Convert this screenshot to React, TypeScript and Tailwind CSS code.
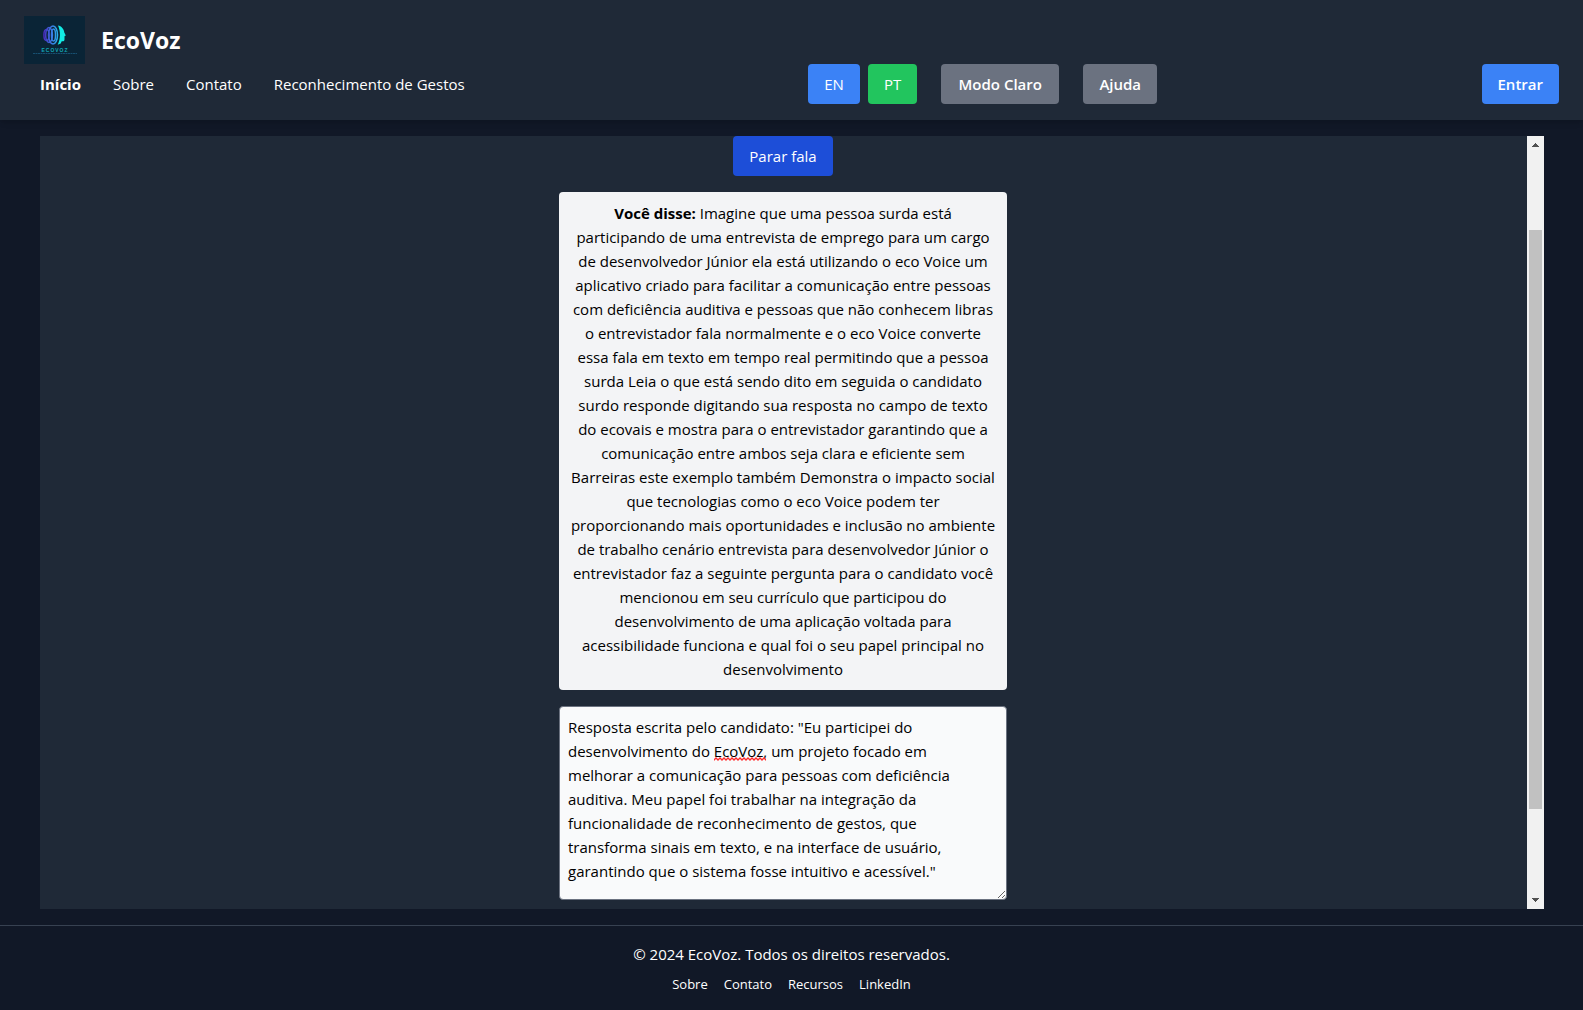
import React from "react";

const transcript = `Imagine que uma pessoa surda está
participando de uma entrevista de emprego para um cargo
de desenvolvedor Júnior ela está utilizando o eco Voice um
aplicativo criado para facilitar a comunicação entre pessoas
com deficiência auditiva e pessoas que não conhecem libras
o entrevistador fala normalmente e o eco Voice converte
essa fala em texto em tempo real permitindo que a pessoa
surda Leia o que está sendo dito em seguida o candidato
surdo responde digitando sua resposta no campo de texto
do ecovais e mostra para o entrevistador garantindo que a
comunicação entre ambos seja clara e eficiente sem
Barreiras este exemplo também Demonstra o impacto social
que tecnologias como o eco Voice podem ter
proporcionando mais oportunidades e inclusão no ambiente
de trabalho cenário entrevista para desenvolvedor Júnior o
entrevistador faz a seguinte pergunta para o candidato você
mencionou em seu currículo que participou do
desenvolvimento de uma aplicação voltada para
acessibilidade funciona e qual foi o seu papel principal no
desenvolvimento`;

const answer = `Resposta escrita pelo candidato: "Eu participei do
desenvolvimento do EcoVoz, um projeto focado em
melhorar a comunicação para pessoas com deficiência
auditiva. Meu papel foi trabalhar na integração da
funcionalidade de reconhecimento de gestos, que
transforma sinais em texto, e na interface de usuário,
garantindo que o sistema fosse intuitivo e acessível."`;

function Logo() {
  return (
    <svg viewBox="0 0 61 48" className="h-12 w-[61px]" role="img" aria-label="Logo EcoVoz">
      <defs>
        <linearGradient id="wave" gradientUnits="userSpaceOnUse" x1="19" x2="36" y1="0" y2="0">
          <stop offset="0" stopColor="#4a22b8" />
          <stop offset="0.5" stopColor="#3c78e6" />
          <stop offset="1" stopColor="#20c4ee" />
        </linearGradient>
      </defs>
      <rect width="61" height="48" fill="#0a2436" />
      <g fill="none" stroke="url(#wave)" strokeWidth="1.5">
        <ellipse cx="22.500" cy="19" rx="2.600" ry="5.500" />
        <ellipse cx="25" cy="19" rx="3.400" ry="7.500" />
        <ellipse cx="29" cy="19" rx="4.500" ry="9" />
        <ellipse cx="29.500" cy="19" rx="2" ry="6" />
      </g>
      <path d="M34 9.500c3.500 .5 6 3.500 6.300 7l1.500 3-1.300 .8v3.200c0 1.500-1 2-2.800 1.800l-1 2.200-3 1.200c3-6 3-13 .3-19.200z" fill="#12ebe4" />
      <text x="31" y="36" textAnchor="middle" fontSize="5" fontWeight="700" letterSpacing="1" fill="#12a9b8" fontFamily="Liberation Sans, sans-serif">ECOVOZ</text>
      <path d="M9 37.500h44" stroke="#164f70" strokeWidth="1" strokeDasharray="2 .5" />
    </svg>
  );
}

function ScrollBar() {
  return (
    <div aria-hidden="true" className="flex w-[17px] shrink-0 flex-col items-center bg-[#f1f1f1]">
      <svg viewBox="0 0 17 17" className="size-[17px]" fill="#505050" shapeRendering="crispEdges">
        <path d="M5 11h7v-1h-1v-1h-1v-1h-1v-1h-1v1h-1v1h-1v1h-1z" />
      </svg>
      <div className="flex-[77]" />
      <div className="w-[13px] flex-[579] bg-[#c1c1c1]" />
      <div className="flex-[83]" />
      <svg viewBox="0 0 17 17" className="size-[17px]" fill="#505050" shapeRendering="crispEdges">
        <path d="M5 6h7v1h-1v1h-1v1h-1v1h-1v-1h-1v-1h-1v-1h-1z" />
      </svg>
    </div>
  );
}

export default function App() {
  return (
    <div className="flex h-screen flex-col bg-[#111827] font-['Segoe_UI','Open_Sans',sans-serif] text-[15px] leading-6 text-white">
      <header className="bg-[#1f2937] px-6 py-4 shadow-md">
        <div className="flex items-center gap-4">
          <Logo />
          <h1 className="text-[23px] leading-8 font-bold">EcoVoz</h1>
        </div>
        <div className="flex items-center justify-between">
          <nav className="flex min-w-[460px] gap-8 pl-4">
            <a href="#inicio" className="font-bold">Início</a>
            <a href="#sobre">Sobre</a>
            <a href="#contato">Contato</a>
            <a href="#gestos">Reconhecimento de Gestos</a>
          </nav>
          <div className="flex gap-6">
            <div className="flex gap-2">
              <button className="rounded bg-[#3b82f6] px-4 py-2">EN</button>
              <button className="rounded bg-[#22c55e] px-4 py-2">PT</button>
            </div>
            <button className="min-w-[118px] rounded bg-[#6b7280] px-4 py-2 font-semibold">Modo Claro</button>
            <button className="min-w-[74px] rounded bg-[#6b7280] px-4 py-2 font-semibold">Ajuda</button>
          </div>
          <button className="rounded bg-[#3b82f6] px-4 py-2 font-semibold">Entrar</button>
        </div>
      </header>

      <main className="flex min-h-0 flex-1 py-4 pr-[39px] pl-10">
        <section className="flex flex-1 flex-col items-center gap-4 overflow-hidden bg-[#1f2937] pr-px">
          <button className="rounded bg-[#1d4ed8] px-4 py-2">Parar fala</button>
          <p className="w-full max-w-md rounded bg-[#f3f4f6] px-2 py-[9px] text-center whitespace-pre-line text-black">
            <strong>Você disse:</strong> {transcript}
          </p>
          <div className="relative w-full max-w-md">
            <textarea
              aria-label="Resposta escrita"
              defaultValue={answer}
              spellCheck={false}
              className="block h-[194px] w-full resize rounded border border-[#6b7280] bg-[#f9fafb] px-2 py-2 text-black"
            />
            <svg className="absolute top-[51px] left-[155px] h-1 w-[52px]" aria-hidden="true">
              <defs>
                <pattern id="squiggle" width="4" height="4" patternUnits="userSpaceOnUse">
                  <path d="M-2 1L0 3L2 1L4 3L6 1" fill="none" stroke="#ff2a2a" strokeWidth="1.3" />
                </pattern>
              </defs>
              <rect width="100%" height="4" fill="url(#squiggle)" />
            </svg>
          </div>
        </section>
        <ScrollBar />
      </main>

      <footer className="border-t border-[#374151] py-4 text-center">
        <p>© 2024 EcoVoz. Todos os direitos reservados.</p>
        <nav className="mt-2 flex justify-center gap-4 text-[13px] leading-5">
          <a href="#sobre">Sobre</a>
          <a href="#contato">Contato</a>
          <a href="#recursos">Recursos</a>
          <a href="#linkedin">LinkedIn</a>
        </nav>
      </footer>
    </div>
  );
}
